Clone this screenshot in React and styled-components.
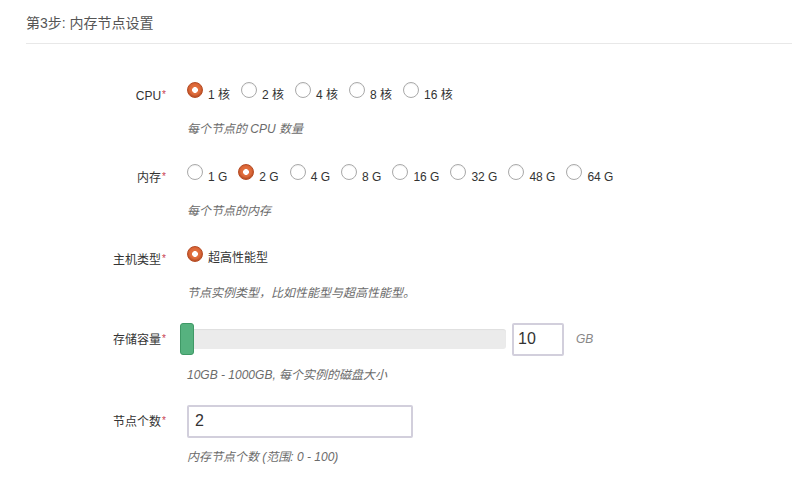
import React, { useState } from "react";
import styled, { createGlobalStyle } from "styled-components";

const GlobalStyle = createGlobalStyle`
  body {
    margin: 0;
    background: #fff;
    font-family: "Liberation Sans", Arial, "Noto Sans CJK SC", sans-serif;
    color: #333;
  }
`;

const Page = styled.div`
  padding-left: 26px;
`;

const Title = styled.h3`
  margin: 0;
  padding: 13px 0 9px;
  font-size: 14px;
  font-weight: normal;
  line-height: 21px;
  color: #555;
  border-bottom: 1px solid #e8e8e8;
`;

const Form = styled.div`
  padding-top: 32px;
`;

const Row = styled.div`
  display: grid;
  grid-template-columns: 140px 1fr;
  column-gap: 21px;
  margin-bottom: 19px;
`;

const Label = styled.div`
  text-align: right;
  font-size: 12px;
  line-height: 16px;
  padding-top: ${(p) => (p.$radio ? 12 : 10)}px;
  color: #333;
`;

const Star = styled.sup`
  color: #c8404f;
  font-size: 10px;
  margin-left: 1px;
  vertical-align: 2px;
  line-height: 0;
`;

const Line = styled.div`
  height: 34px;
  display: flex;
  align-items: ${(p) => (p.$center ? "center" : "flex-start")};
`;

const Option = styled.label`
  display: inline-flex;
  align-items: flex-start;
  margin-right: 11px;
  cursor: pointer;
`;

const Radio = styled.span`
  box-sizing: border-box;
  width: 16px;
  height: 16px;
  margin-top: 6px;
  margin-right: 5px;
  border-radius: 50%;
  flex-shrink: 0;
  border: 1px solid ${(p) => (p.$on ? "#b44a22" : "#a9a9a9")};
  background: ${(p) =>
    p.$on
      ? "radial-gradient(circle, #fff 0 2.6px, #e2703f 3.2px, #d65d2f 100%)"
      : "#fff"};
  box-shadow: ${(p) =>
    p.$on ? "inset 0 -1px 2px rgba(120,40,10,0.45)" : "inset 0 1px 1px rgba(0,0,0,0.06)"};
`;

const OptionText = styled.span`
  font-size: 12px;
  line-height: 16px;
  margin-top: ${(p) => (p.$cjk ? 10 : 11)}px;
  color: #333;
`;

const Help = styled.div`
  margin-top: 9px;
  font-size: 12px;
  line-height: 20px;
  font-style: italic;
  color: #6b6b6b;
`;

const Slider = styled.div`
  position: relative;
  width: 319px;
  height: 20px;
  border-radius: 3px;
  background: #ebebeb;
  box-shadow: inset 0 1px 1px rgba(0, 0, 0, 0.05);
`;

const Thumb = styled.div`
  position: absolute;
  left: -7px;
  top: -6px;
  box-sizing: border-box;
  width: 14px;
  height: 32px;
  border-radius: 3px;
  background: #56b27f;
  border: 1px solid #3f9966;
`;

const Input = styled.input`
  box-sizing: border-box;
  width: ${(p) => p.$w}px;
  height: 33px;
  margin-left: ${(p) => p.$ml || 0}px;
  padding: 0 ${(p) => p.$pad}px;
  border: 2px solid #d2cfdc;
  border-radius: 2px;
  font-family: "Liberation Sans", Arial, sans-serif;
  font-size: 16px;
  color: #333;
  outline: none;
`;

const Unit = styled.span`
  margin-left: 12px;
  font-size: 12px;
  font-style: italic;
  color: #888;
`;

function RadioGroup({ options, value, onChange, cjk }) {
  return (
    <Line>
      {options.map((o) => (
        <Option key={o} onClick={() => onChange(o)}>
          <Radio $on={o === value} />
          <OptionText $cjk={cjk}>{o}</OptionText>
        </Option>
      ))}
    </Line>
  );
}

export default function App() {
  const [cpu, setCpu] = useState("1 核");
  const [mem, setMem] = useState("2 G");
  const [kind, setKind] = useState("超高性能型");
  const [disk, setDisk] = useState("10");
  const [count, setCount] = useState("2");

  return (
    <Page>
      <GlobalStyle />
      <Title>第3步: 内存节点设置</Title>
      <Form>
        <Row>
          <Label $radio>
            CPU<Star>*</Star>
          </Label>
          <div>
            <RadioGroup
              options={["1 核", "2 核", "4 核", "8 核", "16 核"]}
              value={cpu}
              onChange={setCpu}
            />
            <Help>每个节点的 CPU 数量</Help>
          </div>
        </Row>
        <Row>
          <Label $radio>
            内存<Star>*</Star>
          </Label>
          <div>
            <RadioGroup
              options={["1 G", "2 G", "4 G", "8 G", "16 G", "32 G", "48 G", "64 G"]}
              value={mem}
              onChange={setMem}
            />
            <Help>每个节点的内存</Help>
          </div>
        </Row>
        <Row>
          <Label $radio>
            主机类型<Star>*</Star>
          </Label>
          <div>
            <RadioGroup options={["超高性能型"]} value={kind} onChange={setKind} cjk />
            <Help>节点实例类型，比如性能型与超高性能型。</Help>
          </div>
        </Row>
        <Row>
          <Label>
            存储容量<Star>*</Star>
          </Label>
          <div>
            <Line $center>
              <Slider>
                <Thumb />
              </Slider>
              <Input $w={52} $ml={6} $pad={4} value={disk} onChange={(e) => setDisk(e.target.value)} />
              <Unit>GB</Unit>
            </Line>
            <Help>10GB - 1000GB, 每个实例的磁盘大小</Help>
          </div>
        </Row>
        <Row>
          <Label>
            节点个数<Star>*</Star>
          </Label>
          <div>
            <Line $center>
              <Input $w={226} $pad={6} value={count} onChange={(e) => setCount(e.target.value)} />
            </Line>
            <Help>内存节点个数 (范围: 0 - 100)</Help>
          </div>
        </Row>
      </Form>
    </Page>
  );
}
